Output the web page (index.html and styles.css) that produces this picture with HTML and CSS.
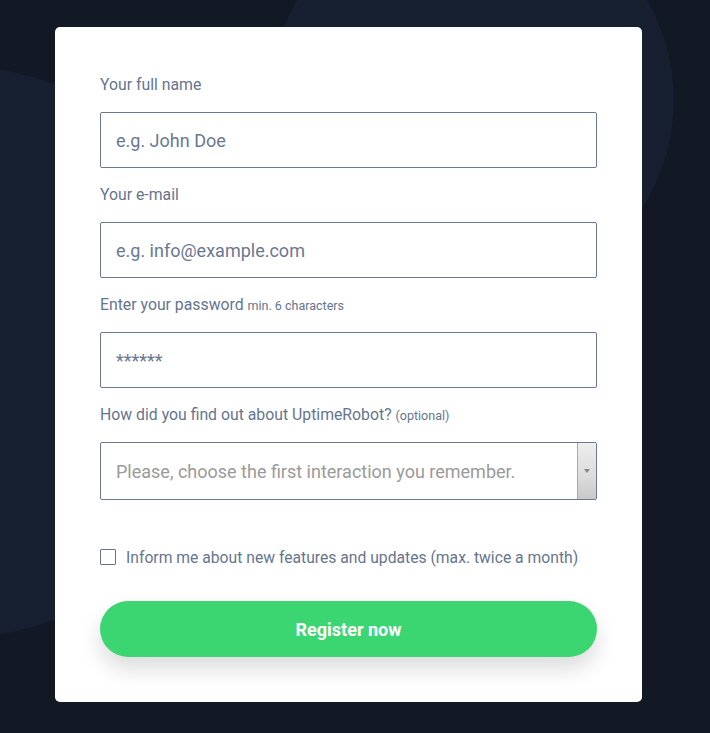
FILE: index.html
```html
<!DOCTYPE html>
<html>
<head>
<meta charset="utf-8">
<link rel="stylesheet" href="styles.css">
</head>
<body>
<div class="page">
  <form class="card">
    <div class="field">
      <label class="label">Your full name</label>
      <input class="input" type="text" placeholder="e.g. John Doe">
    </div>
    <div class="field">
      <label class="label">Your e-mail</label>
      <input class="input" type="text" placeholder="e.g. info@example.com">
    </div>
    <div class="field">
      <label class="label">Enter your password <small class="hint">min. 6 characters</small></label>
      <input class="input" type="text" placeholder="******">
    </div>
    <div class="field">
      <label class="label">How did you find out about UptimeRobot? <small class="hint">(optional)</small></label>
      <div class="select">
        <span class="select-text">Please, choose the first interaction you remember.</span>
        <span class="select-arrow"><span class="tri"></span></span>
      </div>
    </div>
    <label class="check">
      <span class="box"></span>
      <span class="check-text">Inform me about new features and updates (max. twice a month)</span>
    </label>
    <button class="btn" type="button">Register now</button>
  </form>
</div>
</body>
</html>
```
FILE: styles.css
```css
* { box-sizing: border-box; }
html, body { margin: 0; padding: 0; }
body {
  width: 710px;
  height: 733px;
  overflow: hidden;
  font-family: Roboto, "Liberation Sans", sans-serif;
  background-color: #121824;
  background-image:
    radial-gradient(circle 202px at 472px 100px, #172031 99.5%, transparent 100%),
    radial-gradient(circle 287px at -48px 352px, #172031 99.5%, transparent 100%);
  background-repeat: no-repeat;
}
.page {
  padding: 27px 0 0 55px;
}
.card {
  width: 587px;
  height: 675px;
  background: #fff;
  border-radius: 5px;
  padding: 47px 45px 0 45px;
  display: flex;
  flex-direction: column;
}
.field {
  display: flex;
  flex-direction: column;
  margin-bottom: 16px;
}
.label {
  display: block;
  height: 20px;
  font-size: 15.8px;
  line-height: 22px;
  color: #66758e;
  margin-bottom: 18px;
  white-space: nowrap;
}
.hint {
  font-size: 12.5px;
  line-height: 1;
  color: #66758e;
}
.input {
  height: 56px;
  width: 497px;
  border: 1px solid #6a7893;
  border-radius: 2px;
  padding: 0 15px;
  font-family: Roboto, "Liberation Sans", sans-serif;
  font-size: 18px;
  color: #66758e;
  outline: none;
}
.input::placeholder { color: #6a7891; opacity: 1; }
.select {
  height: 58px;
  width: 497px;
  border: 1px solid #6a7893;
  border-radius: 2px;
  display: flex;
  align-items: stretch;
}
.select-text {
  flex: 1;
  display: flex;
  align-items: center;
  padding-left: 15px;
  font-size: 18px;
  color: #9a9a9a;
}
.select-arrow {
  width: 19px;
  border-left: 1px solid #a8a8a8;
  background: linear-gradient(#eeeeee, #dcdcdc 60%, #c9c9c9);
  display: flex;
  align-items: center;
  justify-content: center;
}
.tri {
  width: 0; height: 0;
  border-left: 3px solid transparent;
  border-right: 3px solid transparent;
  border-top: 4px solid #888;
}
.check {
  display: flex;
  align-items: center;
  gap: 10px;
  margin-top: 29px;
  height: 24px;
}
.box {
  width: 16px;
  height: 16px;
  border: 1.5px solid #64748d;
  border-radius: 1px;
}
.check-text {
  font-size: 15.7px;
  color: #66758e;
}
.btn {
  margin-top: 32px;
  width: 497px;
  height: 56px;
  border: none;
  border-radius: 28px;
  background: #3bd671;
  color: #fff;
  font-family: Roboto, "Liberation Sans", sans-serif;
  font-weight: 700;
  font-size: 18px;
  box-shadow: 0 12px 22px rgba(0,0,0,0.14);
}
```
